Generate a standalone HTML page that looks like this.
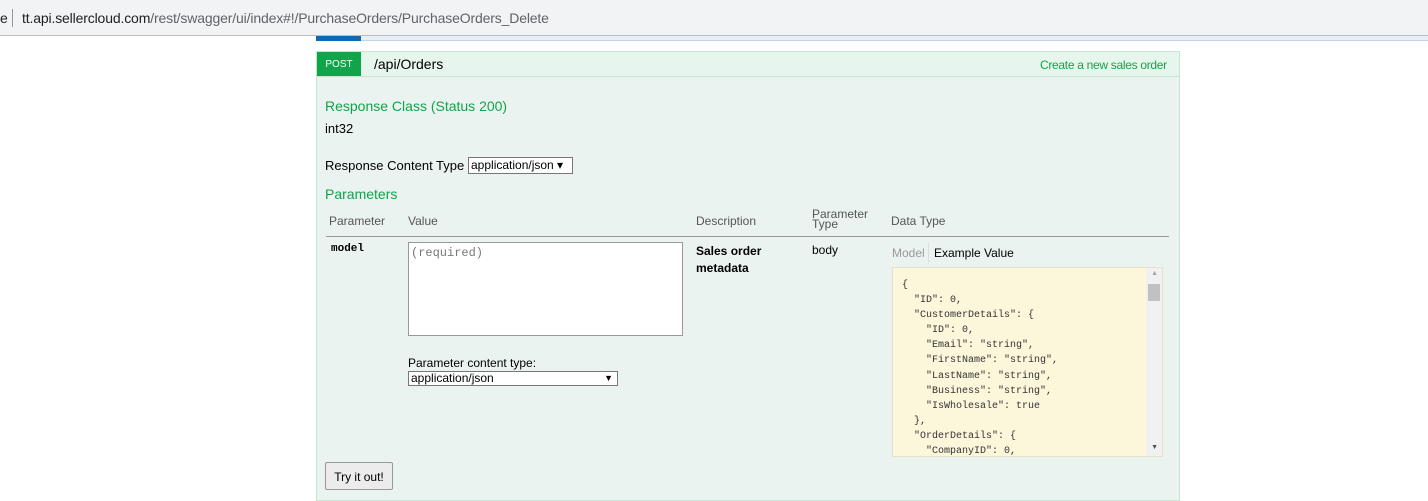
<html><head><style>
body{margin:0;width:1428px;height:499px;overflow:hidden;background:#fff;font-family:"Liberation Sans",Arial,sans-serif;position:relative}
.a{position:absolute}
.mono{font-family:"Liberation Mono","DejaVu Sans Mono",monospace}
</style></head><body>
<div class="a" style="left:0;top:0;width:1428px;height:35px;background:#f1f3f4;border-bottom:1px solid #b9bbbd"></div>
<div class="a" style="left:0;top:10px;font-size:14px;color:#202124">e</div>
<div class="a" style="left:12px;top:9px;width:1px;height:18px;background:#999"></div>
<div class="a" style="left:22px;top:10px;font-size:14px;letter-spacing:-0.15px;color:#202124">tt.api.sellercloud.com<span style="color:#5f6368">/rest/swagger/ui/index#!/PurchaseOrders/PurchaseOrders_Delete</span></div>
<div class="a" style="left:316px;top:36px;width:1112px;height:4px;background:#e7eef6;border-bottom:1px solid #c3d4e6"></div>
<div class="a" style="left:316px;top:36px;width:45px;height:5px;background:#0f6ab4"></div>
<div class="a" style="left:316px;top:51px;width:862px;height:448px;background:#ebf3f0;border:1px solid #c3e8d1"></div>
<div class="a" style="left:317px;top:52px;width:862px;height:24px;background:#e7f6ec;border-bottom:1px solid #c3e8d1"></div>
<div class="a" style="left:317px;top:52px;width:44px;height:24px;background:#10a54a;color:#fff;font-size:10px;line-height:25px;text-align:center">POST</div>
<div class="a" style="left:374px;top:56px;font-size:14px;color:#000">/api/Orders</div>
<div class="a" style="left:1040px;top:58px;font-size:12px;letter-spacing:-0.3px;color:#10a54a">Create a new sales order</div>
<div class="a" style="left:325px;top:98px;font-size:14px;color:#10a54a">Response Class (Status 200)</div>
<div class="a" style="left:325px;top:121px;font-size:13px;color:#000">int32</div>
<div class="a" style="left:325px;top:158px;font-size:13px;color:#000">Response Content Type</div>
<div class="a" style="left:468px;top:157px;border:1px solid #767676;background:#fff;font-size:12px;line-height:15px;padding-left:2px;box-sizing:border-box;width:105px;height:17px">application/json ▾</div>
<div class="a" style="left:325px;top:186px;font-size:14px;color:#10a54a">Parameters</div>
<div class="a" style="left:329px;top:214px;font-size:12px;color:#555">Parameter</div>
<div class="a" style="left:408px;top:214px;font-size:12px;color:#555">Value</div>
<div class="a" style="left:696px;top:214px;font-size:12px;color:#555">Description</div>
<div class="a" style="left:812px;top:209px;font-size:12px;color:#555;line-height:10px">Parameter<br>Type</div>
<div class="a" style="left:891px;top:214px;font-size:12px;color:#555">Data Type</div>
<div class="a" style="left:326px;top:236px;width:843px;height:1px;background:#999"></div>
<div class="a mono" style="left:331px;top:243px;font-size:11px;font-weight:bold">model</div>
<div class="a" style="left:408px;top:242px;width:275px;height:94px;border:1px solid #999;background:#fff;box-sizing:border-box"></div>
<div class="a mono" style="left:411px;top:246px;font-size:12px;color:#777">(required)</div>
<div class="a" style="left:408px;top:356px;font-size:12px">Parameter content type:</div>
<div class="a" style="left:408px;top:371px;width:210px;height:15px;border:1px solid #767676;background:#fff;font-size:12px;line-height:13px;padding-left:2px;box-sizing:border-box">application/json<span style="position:absolute;right:4px;font-size:9px">▼</span></div>
<div class="a" style="left:696px;top:243px;font-size:12px;font-weight:bold;line-height:17px">Sales order<br>metadata</div>
<div class="a" style="left:812px;top:243px;font-size:12px">body</div>
<div class="a" style="left:892px;top:246px;font-size:12px;color:#999">Model</div>
<div class="a" style="left:928px;top:243px;width:1px;height:20px;background:#ddd"></div>
<div class="a" style="left:934px;top:246px;font-size:12px;color:#000">Example Value</div>
<div class="a" style="left:892px;top:267px;width:271px;height:190px;background:#fcf6db;border:1px solid #e5e0c6;box-sizing:border-box;overflow:hidden">
<pre class="mono" style="margin:0;padding:10px 0 0 9px;font-size:10px;line-height:15.1px;color:#333">{
  "ID": 0,
  "CustomerDetails": {
    "ID": 0,
    "Email": "string",
    "FirstName": "string",
    "LastName": "string",
    "Business": "string",
    "IsWholesale": true
  },
  "OrderDetails": {
    "CompanyID": 0,</pre>
<div class="a" style="right:0;top:0;width:16px;height:190px;background:#f1f1f1"></div>
<div class="a" style="right:2px;top:16px;width:12px;height:17px;background:#c1c1c1"></div>
<div class="a" style="right:4px;top:2px;font-size:7px;color:#a3a3a3">▲</div>
<div class="a" style="right:4px;top:176px;font-size:7px;color:#505050">▼</div>
</div>
<div class="a" style="left:325px;top:462px;width:68px;height:28px;border:1px solid #999;border-radius:2px;background:#ececec;font-size:12px;line-height:28px;text-align:center;box-sizing:border-box">Try it out!</div>
</body></html>
